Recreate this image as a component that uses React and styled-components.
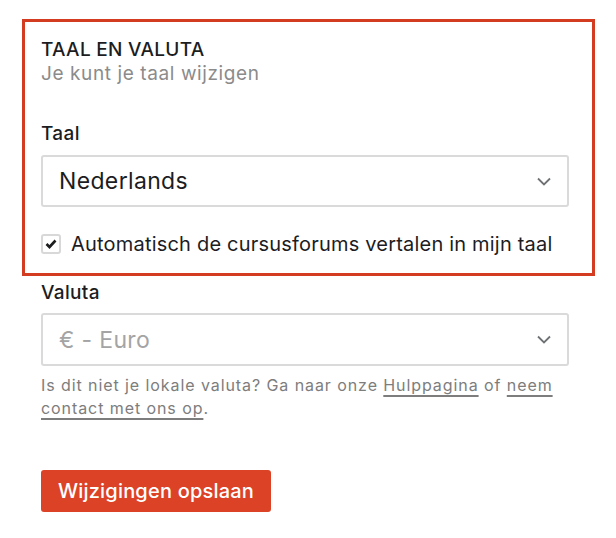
import React from 'react';
import styled, { createGlobalStyle } from 'styled-components';

const GlobalStyle = createGlobalStyle`
  body {
    margin: 0;
    background: #fff;
    font-family: Inter, "Noto Sans", "Liberation Sans", sans-serif;
    color: #1c1d1f;
  }
`;

const Page = styled.div`
  width: 528px;
  padding: 19px 0 0 41px;
`;

// highlighted section, red outline around the language block
const Section = styled.section`
  margin: 0 -26px 0 -19px;
  padding: 16px 23px 18px 16px;
  border: 3px solid #d43c22;
`;

const Title = styled.h2`
  margin: 0;
  font-size: 19px;
  line-height: 24px;
  font-weight: 500;
  letter-spacing: 0.3px;
`;

const Subtitle = styled.p`
  margin: 0;
  font-size: 19px;
  line-height: 24px;
  color: #8b8b8b;
  letter-spacing: 0.6px;
`;

const Label = styled.label`
  display: block;
  margin-top: ${p => p.$top || 0}px;
  font-size: 19px;
  line-height: 24px;
  font-weight: 500;
  letter-spacing: 0.35px;
`;

const Select = styled.div`
  display: flex;
  align-items: center;
  justify-content: space-between;
  box-sizing: border-box;
  height: ${p => p.$height || 52}px;
  margin-top: ${p => p.$top || 0}px;
  padding: 0 16px 0 16px;
  border: 2px solid #dadada;
  border-radius: 3px;
  font-size: 23px;
  color: ${p => (p.$muted ? '#a4a4a4' : '#1c1d1f')};
  letter-spacing: 0.35px;
`;

const Chevron = () => (
  <svg width="14" height="9" viewBox="0 0 14 9" fill="none">
    <path d="M1 1.5l6 6 6-6" stroke="#6f7275" strokeWidth="1.8" />
  </svg>
);

const CheckRow = styled.div`
  display: flex;
  align-items: center;
  gap: 10px;
  margin-top: 26px;
  font-size: 20px;
  line-height: 22px;
  letter-spacing: 0.2px;
`;

const Box = styled.span`
  display: flex;
  align-items: center;
  justify-content: center;
  box-sizing: border-box;
  width: 20px;
  height: 20px;
  border: 2px solid #d8d8d8;
  border-radius: 3px;
`;

const Help = styled.p`
  margin: 8px 0 0;
  font-size: 16px;
  line-height: 23px;
  color: #7d7d7d;
  letter-spacing: 0.92px;
`;

const HelpLink = styled.a`
  color: inherit;
  text-decoration: underline;
  text-decoration-thickness: 2px;
  text-underline-offset: 4px;
`;

const SaveButton = styled.button`
  margin-top: 50px;
  width: 230px;
  height: 42px;
  border: 0;
  border-radius: 3px;
  background: #dc4226;
  color: #fff;
  font-family: inherit;
  font-size: 20px;
  font-weight: 500;
  letter-spacing: 0.2px;
`;

export default function App() {
  return (
    <>
      <GlobalStyle />
      <Page>
        <Section>
          <Title>TAAL EN VALUTA</Title>
          <Subtitle>Je kunt je taal wijzigen</Subtitle>
          <Label $top={36}>Taal</Label>
          <Select $top={9}>
            <span>Nederlands</span>
            <Chevron />
          </Select>
          <CheckRow>
            <Box>
              <svg width="12" height="10" viewBox="0 0 12 10" fill="none">
                <path d="M1.5 5l3 3 6-6.5" stroke="#1c1d1f" strokeWidth="2.6" />
              </svg>
            </Box>
            <span>Automatisch de cursusforums vertalen in mijn taal</span>
          </CheckRow>
        </Section>
        <Label $top={5}>Valuta</Label>
        <Select $top={8} $height={53} $muted>
          <span>€ - Euro</span>
          <Chevron />
        </Select>
        <Help>
          Is dit niet je lokale valuta? Ga naar onze <HelpLink href="#">Hulppagina</HelpLink> of{' '}
          <HelpLink href="#">neem</HelpLink> <HelpLink href="#">contact met ons op</HelpLink>.
        </Help>
        <SaveButton>Wijzigingen opslaan</SaveButton>
      </Page>
    </>
  );
}
